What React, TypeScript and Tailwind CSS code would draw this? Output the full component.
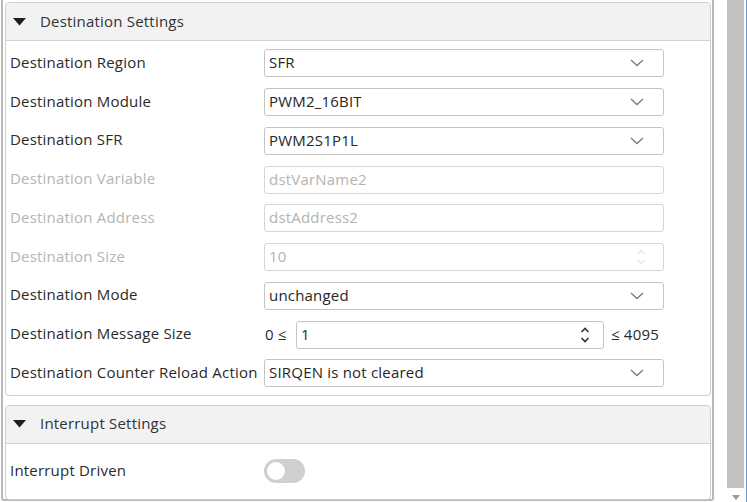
import React from "react";

const Chevron = ({ light }: { light?: boolean }) => (
  <svg width="14" height="8" viewBox="0 0 14 8" className="shrink-0">
    <path d="M1 1 L7 6.5 L13 1" fill="none" stroke={light ? "#c8c8c8" : "#7a7a7a"} strokeWidth="1.3" />
  </svg>
);

const Spin = ({ light }: { light?: boolean }) => (
  <svg width="10" height="18" viewBox="0 0 10 18" className="shrink-0">
    <path d="M1.5 6 L5 2.5 L8.5 6" fill="none" stroke={light ? "#cfcfcf" : "#333"} strokeWidth={light ? 1 : 1.6} />
    <path d="M1.5 12 L5 15.5 L8.5 12" fill="none" stroke={light ? "#cfcfcf" : "#333"} strokeWidth={light ? 1 : 1.6} />
  </svg>
);

const Select = ({ value }: { value: string }) => (
  <div className="w-[400px] h-[28px] border border-[#c4c4c4] rounded-[3px] bg-white flex items-center pl-[4px] pr-[19px] justify-between text-[#262626]">
    <span className="pb-px">{value}</span>
    <Chevron />
  </div>
);

const Disabled = ({ value, spin }: { value: string; spin?: boolean }) => (
  <div className="w-[400px] h-[28px] border border-[#d6d6d6] rounded-[3px] bg-white flex items-center pl-[4px] pr-[17px] justify-between text-[#b3b3b3]">
    <span className="pb-px">{value}</span>
    {spin && <Spin light />}
  </div>
);

const Row = ({ label, disabled, children }: { label: string; disabled?: boolean; children: React.ReactNode }) => (
  <div className="h-[38.75px] flex items-center">
    <div className={`w-[258px] pl-[4px] pb-[2px] whitespace-nowrap ${disabled ? "text-[#b5b5b5]" : "text-[#2a2a2a]"}`}>{label}</div>
    {children}
  </div>
);

const Header = ({ title }: { title: string }) => (
  <div className="h-[38px] bg-[#f2f2f2] border-b border-[#d2d2d2] rounded-t-[4px] flex items-center pl-[7px] text-[#333]">
    <svg width="13" height="8" viewBox="0 0 13 8" className="mr-[14px]">
      <path d="M0 0 L13 0 L6.5 7.5 Z" fill="#1f1f1f" />
    </svg>
    <span className="pb-px">{title}</span>
  </div>
);

export default function App() {
  return (
    <div
      className="w-[747px] h-[502px] bg-white flex overflow-hidden text-[15px] tracking-[0.2px] leading-none"
      style={{ fontFamily: '"Open Sans", "Noto Sans", sans-serif' }}
    >
      <div className="w-[714px] h-[501px] ml-px border-l-2 border-r-2 border-b-2 border-[#b8b8b8] rounded-b-[3px] flex flex-col pl-[2px] pr-[1px] pt-[2px]">
        <div className="border border-[#cfcfcf] rounded-[4px] flex flex-col">
          <Header title="Destination Settings" />
          <div className="pt-[3px] pb-[2px]">
            <Row label="Destination Region"><Select value="SFR" /></Row>
            <Row label="Destination Module"><Select value="PWM2_16BIT" /></Row>
            <Row label="Destination SFR"><Select value="PWM2S1P1L" /></Row>
            <Row label="Destination Variable" disabled><Disabled value="dstVarName2" /></Row>
            <Row label="Destination Address" disabled><Disabled value="dstAddress2" /></Row>
            <Row label="Destination Size" disabled><Disabled value="10" spin /></Row>
            <Row label="Destination Mode"><Select value="unchanged" /></Row>
            <Row label="Destination Message Size">
              <div className="flex items-center text-[#2a2a2a]">
                <span className="w-[32px] pl-px pb-px">0 ≤</span>
                <div className="w-[308px] h-[28px] border border-[#c4c4c4] rounded-[3px] bg-white flex items-center pl-[4px] pr-[13px] justify-between">
                  <span className="pb-px">1</span>
                  <Spin />
                </div>
                <span className="ml-[7px] pb-px">≤ 4095</span>
              </div>
            </Row>
            <Row label="Destination Counter Reload Action"><Select value="SIRQEN is not cleared" /></Row>
          </div>
        </div>
        <div className="mt-[9px] border border-[#cfcfcf] rounded-[4px] flex flex-col">
          <Header title="Interrupt Settings" />
          <div className="h-[55px] flex items-center">
            <div className="w-[258px] pl-[4px] pb-[2px] text-[#2a2a2a]">Interrupt Driven</div>
            <div className="w-[41px] h-[24px] rounded-full bg-[#cfcfcf] flex items-center pl-[3px]">
              <div className="w-[18px] h-[18px] rounded-full bg-white" />
            </div>
          </div>
        </div>
      </div>
      <div className="w-[13px] bg-white" />
      <div className="w-[19px] flex flex-col">
        <div className="flex-1 bg-[#c1c1c1] mr-[2px] mb-[2px]" />
        <div className="h-[12px] flex justify-center items-start pt-[5px] pr-[2px]">
          <svg width="8" height="5" viewBox="0 0 8 5"><path d="M0 0 L8 0 L4 5 Z" fill="#9a9a9a" /></svg>
        </div>
      </div>
      <div className="w-[1px] bg-[#6b9fd6]" />
    </div>
  );
}
